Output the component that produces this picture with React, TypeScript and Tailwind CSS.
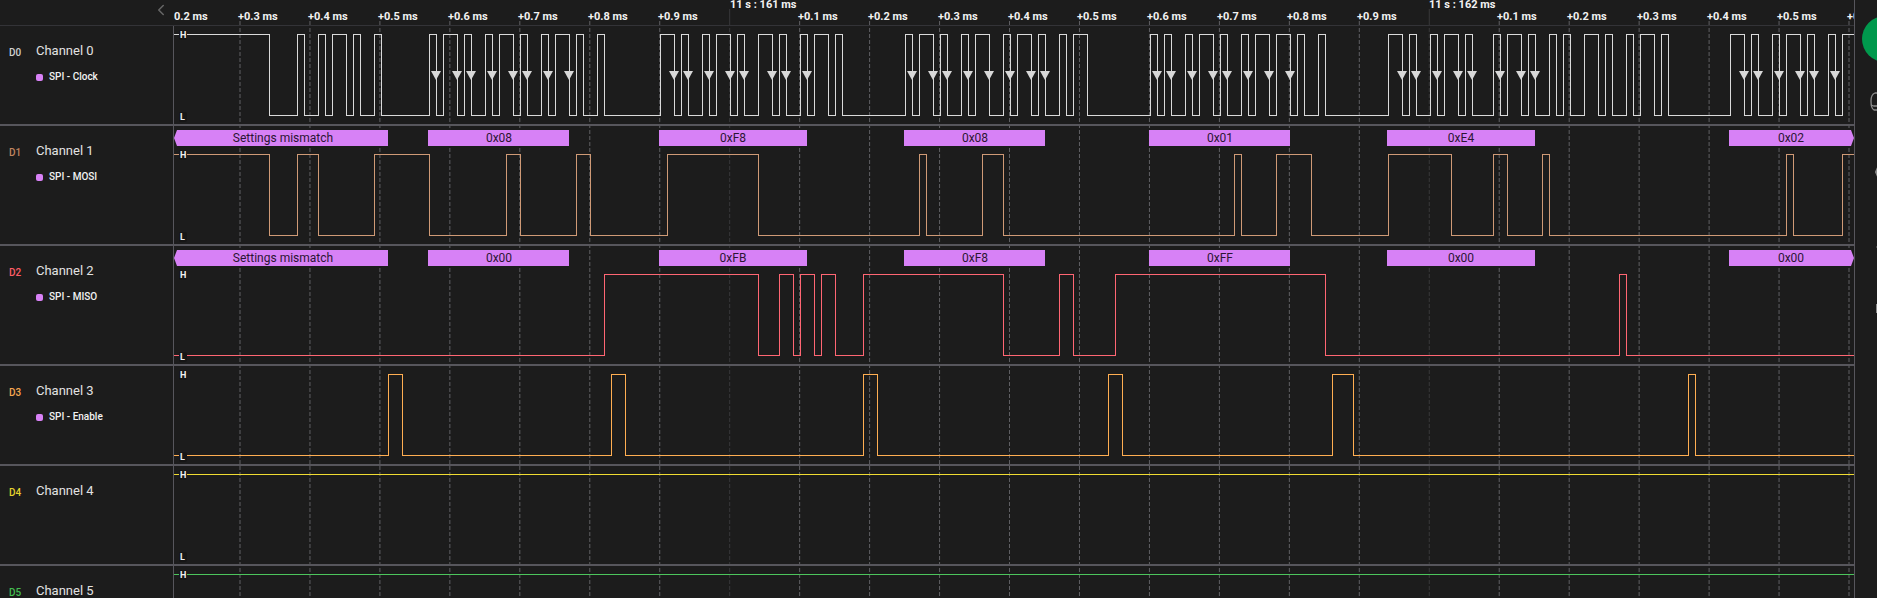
import React from "react";
import { ChevronLeft } from "lucide-react";

type Annotation = { from: number; to: number; text: string; open?: "left" | "right" };

type Channel = {
  id: string;
  name: string;
  role?: string;
  idClass: string;
  stroke: string;
  startHigh: boolean;
  edges: number[];
  sampled?: boolean;
  annotations?: Annotation[];
};

// Horizontal positions are measured from the left edge of the plot.
const TICK_START = 66;
const TICK_STEP = 69.957;
const TICK_COUNT = 24;
const MAJOR_EVERY = 10;
const FIRST_MAJOR = 7;
const END = 4000;

const tickX = (i: number) => TICK_START + i * TICK_STEP;
const isMajor = (i: number) => i % MAJOR_EVERY === FIRST_MAJOR;

const CLOCK_EDGES = [
  95, 123, 130, 144, 151, 158, 172, 179, 186, 200, 207,
  255, 262, 269, 283, 290, 297, 311, 318, 325, 339, 346, 353, 367, 374, 381, 395, 402, 409, 423, 430,
  486, 500, 507, 514, 528, 535, 542, 556, 563, 570, 584, 598, 605, 612, 626, 633, 640, 654, 661, 668,
  731, 738, 745, 759, 766, 773, 787, 794, 801, 815, 829, 836, 843, 857, 864, 871, 885, 892, 899, 913,
  976, 983, 990, 997, 1011, 1018, 1025, 1039, 1046, 1053, 1067, 1074, 1081, 1095, 1102, 1116, 1123, 1130, 1144, 1151,
  1214, 1228, 1235, 1242, 1256, 1263, 1270, 1284, 1291, 1298, 1319, 1326, 1333, 1347, 1354, 1361, 1375, 1382,
  1389, 1396, 1410, 1424, 1431, 1438, 1452, 1459, 1466, 1480, 1487, 1494,
  1556, 1570, 1577, 1584, 1598, 1605, 1612, 1626, 1633, 1640, 1654, 1661, 1668,
];

const SAMPLE_POINTS = [
  262, 283, 297, 318, 339, 353, 374, 395,
  500, 514, 535, 556, 570, 598, 612, 633,
  738, 759, 773, 794, 815, 836, 857, 871,
  983, 997, 1018, 1039, 1053, 1074, 1095, 1116,
  1228, 1242, 1263, 1284, 1298, 1326, 1347, 1361,
  1570, 1584, 1605, 1626, 1640, 1661,
];

const FRAMES: [number, number][] = [
  [0, 214],
  [254, 395],
  [485, 633],
  [730, 871],
  [975, 1116],
  [1213, 1361],
  [1555, 1680],
];

const frames = (texts: string[]): Annotation[] =>
  FRAMES.map(([from, to], i) => ({
    from,
    to,
    text: texts[i],
    open: i === 0 ? "left" : i === FRAMES.length - 1 ? "right" : undefined,
  }));

const CHANNELS: Channel[] = [
  {
    id: "D0", name: "Channel 0", role: "SPI - Clock", idClass: "text-[#d0d0d0]", stroke: "#dadada",
    startHigh: true, edges: CLOCK_EDGES, sampled: true,
  },
  {
    id: "D1", name: "Channel 1", role: "SPI - MOSI", idClass: "text-[#c08560]", stroke: "#cf9a76",
    startHigh: true,
    edges: [
      95, 123, 144, 200, 255, 332, 346, 402, 416, 493, 584, 745, 752, 808, 829, 1060, 1067, 1102, 1137,
      1214, 1277, 1319, 1333, 1368, 1375, 1612, 1619, 1668,
    ],
    annotations: frames(["Settings mismatch", "0x08", "0xF8", "0x08", "0x01", "0xE4", "0x02"]),
  },
  {
    id: "D2", name: "Channel 2", role: "SPI - MISO", idClass: "text-[#ff5c66]", stroke: "#ff6673",
    startHigh: false,
    edges: [430, 584, 605, 619, 626, 640, 647, 661, 689, 829, 885, 899, 941, 1151, 1445, 1452],
    annotations: frames(["Settings mismatch", "0x00", "0xFB", "0xF8", "0xFF", "0x00", "0x00"]),
  },
  {
    id: "D3", name: "Channel 3", role: "SPI - Enable", idClass: "text-[#f5a650]", stroke: "#ffae52",
    startHigh: false,
    edges: [214, 228, 437, 451, 689, 703, 934, 948, 1158, 1179, 1514, 1521],
  },
  { id: "D4", name: "Channel 4", idClass: "text-[#e4d32e]", stroke: "#f0dc32", startHigh: true, edges: [] },
  { id: "D5", name: "Channel 5", idClass: "text-[#43bd50]", stroke: "#4cc55c", startHigh: true, edges: [] },
];

function wavePath(startHigh: boolean, edges: number[], high: number, low: number) {
  let level = startHigh;
  let d = `M0 ${level ? high : low}`;
  for (const x of edges) {
    level = !level;
    d += `H${x + 0.5}V${level ? high : low}`;
  }
  return `${d}H${END}`;
}

function framePoints({ from, to, open }: Annotation) {
  const left = open === "left" ? `${from + 3},20 ${from},12 ${from + 3},4` : `${from},20 ${from},4`;
  const right = open === "right" ? `${to - 3},4 ${to},12 ${to - 3},20` : `${to},4 ${to},20`;
  return `${left} ${right}`;
}

function frameCenter({ from, to, open }: Annotation) {
  const shift = open === "left" ? 2 : open === "right" ? -1 : 0;
  return Math.round((from + to) / 2) + shift;
}

function LevelLabel({ y, children }: { y: number; children: string }) {
  return (
    <g>
      <rect x="5" y={y - 5} width="8" height="10" rx="2" fill="#161616" />
      <text x="6" y={y + 3} className="fill-[#f0f0f0] text-[9px] font-bold">
        {children}
      </text>
    </g>
  );
}

function Plot({ channel }: { channel: Channel }) {
  const top = channel.annotations ? 28 : 8;
  const high = top + 0.5;
  const low = top + 81.5;
  return (
    <svg className="block h-full w-full" role="img" aria-label={`${channel.name} signal`}>
      <path
        d={wavePath(channel.startHigh, channel.edges, high, low)}
        fill="none"
        stroke={channel.stroke}
        strokeWidth="1"
        shapeRendering="crispEdges"
      />
      {channel.sampled &&
        SAMPLE_POINTS.map((x) => (
          <polygon key={x} points={`${x - 5},45 ${x + 5},45 ${x},54`} fill="#d8d8d8" />
        ))}
      {channel.annotations?.map((a) => (
        <g key={a.from}>
          <polygon points={framePoints(a)} fill="#d781f6" />
          <text x={frameCenter(a)} y="16" textAnchor="middle" className="fill-[#2c1533] text-[12px]">
            {a.text}
          </text>
        </g>
      ))}
      <LevelLabel y={top + 1}>H</LevelLabel>
      <LevelLabel y={top + 83}>L</LevelLabel>
    </svg>
  );
}

function ChannelRow({ channel }: { channel: Channel }) {
  return (
    <section
      className={`flex shrink-0 border-b-2 border-[#57565c] ${channel.annotations ? "h-[120px]" : "h-[100px]"}`}
    >
      <div className="flex w-[174px] shrink-0 items-start border-r border-[#57565c] pt-4 pl-[9px]">
        <span className={`w-[27px] pt-[3px] text-[10px] leading-4 font-medium ${channel.idClass}`}>{channel.id}</span>
        <div>
          <h2 className="text-[13px] leading-[18px] text-[#e2e2e2]">{channel.name}</h2>
          {channel.role && (
            <p className="mt-[9px] flex items-center gap-[6px] text-[10px] leading-4 font-medium text-[#f2f2f2]">
              <span className="h-[7px] w-[7px] rounded-[2px] bg-[#d781f6]" />
              {channel.role}
            </p>
          )}
        </div>
      </div>
      <div className="min-w-0 flex-1">
        <Plot channel={channel} />
      </div>
    </section>
  );
}

function TimeAxis() {
  return (
    <svg className="block h-full w-full" role="img" aria-label="Time axis">
      <g className="fill-[#f2f2f2] text-[11px] font-bold">
        <text x="0" y="20">0.2 ms</text>
        {Array.from({ length: TICK_COUNT }, (_, i) =>
          isMajor(i) ? (
            <text key={i} x={Math.round(tickX(i))} y="8">
              {`11 s : ${161 + Math.floor(i / MAJOR_EVERY)} ms`}
            </text>
          ) : (
            <text key={i} x={Math.round(tickX(i)) - 2} y="20">
              {`+0.${(i + 3) % MAJOR_EVERY} ms`}
            </text>
          ),
        )}
      </g>
    </svg>
  );
}

function GridLines() {
  return (
    <svg className="pointer-events-none block h-full w-full" aria-hidden="true">
      {Array.from({ length: TICK_COUNT }, (_, i) => {
        const x = tickX(i);
        const stroke = isMajor(i) ? "#38383a" : "#606064";
        return (
          <g key={i} stroke={stroke} strokeWidth="1">
            <line x1={x} x2={x} y1={isMajor(i) ? 9 : 21} y2="26" />
            <line x1={x} x2={x} y1="28" y2="2000" strokeDasharray="4 2" />
          </g>
        );
      })}
    </svg>
  );
}

function ToolRail() {
  return (
    <aside className="relative z-10 w-[23px] shrink-0 overflow-hidden border-l border-[#57565c] bg-[#1c1c1c] pt-4">
      <div className="flex w-[60px] flex-col items-center text-[#8c8c8c]">
        <button type="button" aria-label="Start capture" className="h-[46px] w-[46px] rounded-full bg-[#00994d]" />
        <button type="button" aria-label="Device" className="mt-[29px] h-[22px] w-[32px]">
          <svg viewBox="0 0 32 22" className="h-full w-full" fill="none" stroke="currentColor" strokeWidth="1.3">
            <path d="M6 2h20c3 1 4 4 4 8s-1 8-3 9H5c-2-1-3-5-3-9s1-7 4-8z" />
            <path d="M2 14l3 1h22l3-1" />
          </svg>
        </button>
        <button type="button" aria-label="Analyzers" className="mt-[48px] h-[22px] w-[20px]">
          <svg viewBox="0 0 20 22" className="h-full w-full" fill="none" stroke="currentColor" strokeWidth="2">
            <path d="M5 2L1 11L5 20H15L19 11L15 2z" />
          </svg>
        </button>
        <button type="button" aria-label="Measurements" className="mt-[54px] h-[20px] w-[18px]">
          <svg viewBox="0 0 18 20" className="h-full w-full" fill="currentColor">
            <path d="M0 10l3-2v4z" />
            <path d="M2 9h14v2H2z" />
          </svg>
        </button>
        <button type="button" aria-label="Extensions" className="mt-[44px] h-[16px] w-[18px]">
          <svg viewBox="0 0 18 16" className="h-full w-full" fill="currentColor">
            <path d="M0 3h18v9H0z" />
          </svg>
        </button>
      </div>
    </aside>
  );
}

export default function App() {
  return (
    <div className="flex h-screen overflow-hidden bg-[#1c1c1c] font-[Roboto,sans-serif]">
      <main className="relative flex min-w-0 flex-1 flex-col overflow-hidden">
        <div className="absolute inset-y-0 right-0 left-[174px]">
          <GridLines />
        </div>
        <header className="relative flex h-[26px] shrink-0 border-b border-[#333337]">
          <div className="flex w-[174px] shrink-0 items-start justify-end pr-[4px]">
            <button type="button" aria-label="Collapse channel list" className="mt-[1px] text-[#666666]">
              <ChevronLeft size={18} strokeWidth={2} />
            </button>
          </div>
          <div className="min-w-0 flex-1">
            <TimeAxis />
          </div>
        </header>
        <div className="relative flex flex-col">
          {CHANNELS.map((channel) => (
            <ChannelRow key={channel.id} channel={channel} />
          ))}
        </div>
      </main>
      <ToolRail />
    </div>
  );
}
